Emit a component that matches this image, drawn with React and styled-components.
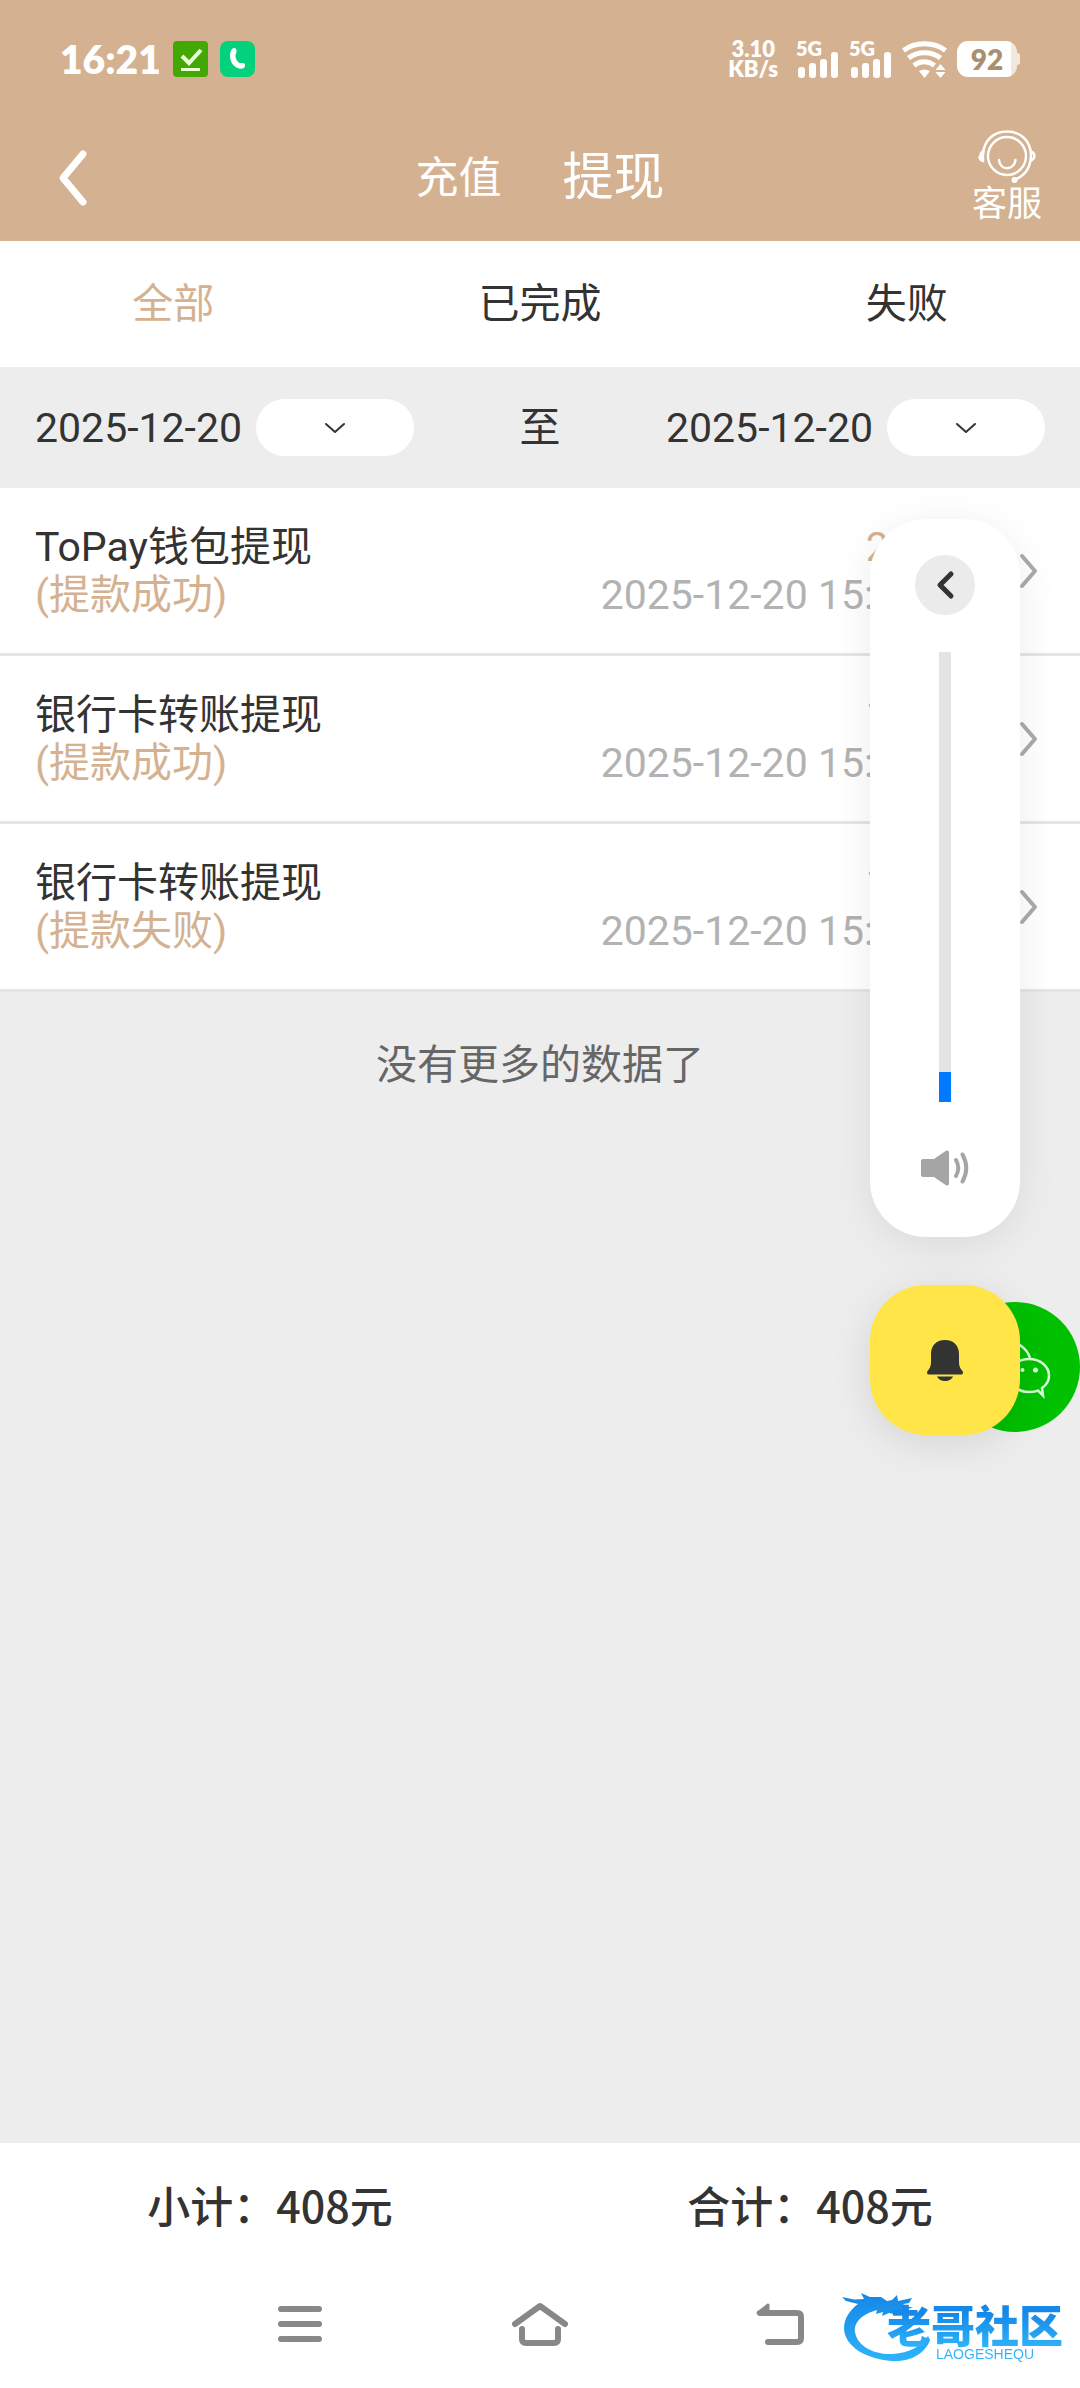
import React, { useState } from 'react';
import styled, { createGlobalStyle } from 'styled-components';

const GlobalStyle = createGlobalStyle`
  * {
    box-sizing: border-box;
  }

  body {
    margin: 0;
    background-color: #ededed;
    color: #333333;
    font-family: Roboto, 'Noto Sans CJK SC', sans-serif;
    font-size: 41px;
    line-height: 48px;
  }

  button {
    padding: 0;
    border: none;
    background: none;
    color: inherit;
    font: inherit;
    cursor: pointer;
  }

  a {
    color: inherit;
    text-decoration: none;
  }

  svg {
    display: block;
    flex-shrink: 0;
  }
`;

const Page = styled.div`
  position: relative;
  display: flex;
  flex-direction: column;
  min-height: 100vh;
  overflow: hidden;
`;

const Header = styled.header`
  background-color: #d4b291;
  color: white;
`;

const StatusBar = styled.div`
  display: flex;
  align-items: center;
  justify-content: space-between;
  height: 118px;
  padding: 0 60px;
`;

const StatusGroup = styled.div`
  display: flex;
  align-items: center;
  gap: ${(props) => props.$gap}px;
`;

const Clock = styled.span`
  font-family: Lato, sans-serif;
  font-size: 39px;
  font-weight: 800;
`;

const Speed = styled.span`
  display: flex;
  flex-direction: column;
  margin-right: 8px;
  font-family: Lato, sans-serif;
  font-size: 22px;
  font-weight: 800;
  line-height: 20px;
  text-align: center;
`;

const Signal = styled.span`
  display: grid;
  width: 43px;
  font-family: Lato, sans-serif;
  font-size: 20px;
  font-weight: 800;
  line-height: 14px;

  > * {
    grid-area: 1 / 1;
  }
`;

const Battery = styled.span`
  display: flex;
  align-items: center;

  span {
    width: 60px;
    border-radius: 11px;
    background: linear-gradient(to right, white 54px, #f3e8dd 54px);
    color: #a98f70;
    font-family: Lato, sans-serif;
    font-size: 28px;
    font-weight: 800;
    line-height: 36px;
    text-align: center;
  }

  &::after {
    content: '';
    width: 3px;
    height: 12px;
    border-radius: 0 3px 3px 0;
    background-color: #f3e8dd;
  }
`;

const TitleBar = styled.div`
  display: grid;
  grid-template-columns: 1fr auto 1fr;
  align-items: center;
  height: 123px;
  padding: 0 38px 4px 56px;
`;

const BackButton = styled.button`
  justify-self: start;
`;

const TitleTabs = styled.nav`
  display: flex;
  align-items: center;
  gap: 61px;
  margin-left: -18px;
`;

const TitleTab = styled.a`
  font-size: ${(props) => (props.$active ? 51 : 43)}px;
  line-height: 60px;
`;

const ServiceLink = styled.a`
  display: flex;
  flex-direction: column;
  align-items: center;
  justify-self: end;
  font-size: 35px;
  line-height: 44px;
`;

const FilterTabs = styled.nav`
  display: flex;
  align-items: center;
  justify-content: space-around;
  height: 126px;
  background-color: white;
`;

const FilterTab = styled.button`
  color: ${(props) => (props.$active ? '#d4b291' : '#333333')};
`;

const DateBar = styled.div`
  display: flex;
  align-items: center;
  justify-content: space-between;
  height: 121px;
  padding: 0 35px;
`;

const DateField = styled.div`
  display: flex;
  align-items: center;
  gap: 14px;
`;

const DateButton = styled.button`
  display: flex;
  align-items: center;
  justify-content: center;
  width: 158px;
  height: 57px;
  border-radius: 29px;
  background-color: white;
`;

const RecordList = styled.ul`
  margin: 0;
  padding: 0;
  list-style: none;
`;

const Record = styled.a`
  display: flex;
  align-items: center;
  gap: 42px;
  padding: 35px 42px 34px 35px;
  border-bottom: 3px solid #e5e5e5;
  background-color: white;
`;

const RecordColumn = styled.div`
  display: flex;
  flex-direction: column;
  flex: ${(props) => (props.$end ? 'none' : 1)};
  align-items: ${(props) => (props.$end ? 'flex-end' : 'flex-start')};
`;

const Accent = styled.span`
  color: #d4b291;
`;

const Time = styled.time`
  color: #b2b2b2;
`;

const NoMore = styled.p`
  flex: 1;
  margin: 0;
  padding-top: 49px;
  color: #666666;
  text-align: center;
`;

const Summary = styled.footer`
  display: grid;
  grid-template-columns: 1fr 1fr;
  align-items: center;
  height: 122px;
  background-color: white;
  font-family: 'Noto Sans CJK SC', sans-serif;
  font-size: 43px;
  font-weight: 500;
  text-align: center;
`;

const SystemNav = styled.nav`
  display: flex;
  align-items: center;
  justify-content: center;
  gap: 180px;
  height: 123px;
  padding-bottom: 5px;
  background-color: white;

  button {
    display: flex;
    justify-content: center;
    width: 60px;
  }
`;

const VolumePanel = styled.aside`
  position: absolute;
  top: 519px;
  right: 60px;
  z-index: 2;
  display: flex;
  flex-direction: column;
  align-items: center;
  width: 150px;
  padding: 36px 0 51px;
  border-radius: 56px;
  background-color: white;
  box-shadow: 0 8px 40px rgba(0, 0, 0, 0.08);
`;

const RoundButton = styled.button`
  display: flex;
  align-items: center;
  justify-content: center;
  width: 60px;
  height: 60px;
  border-radius: 50%;
  background-color: #ebebeb;
`;

const VolumeSlider = styled.input`
  width: 12px;
  height: 450px;
  margin: 37px 0 48px;
  appearance: none;
  writing-mode: vertical-lr;
  direction: rtl;
  background: linear-gradient(to top, #007aff ${(props) => props.$percent}%, #e4e4e4 ${(props) => props.$percent}%);

  &::-webkit-slider-thumb {
    appearance: none;
    width: 12px;
    height: 1px;
  }
`;

const BellButton = styled.button`
  position: absolute;
  top: 1285px;
  right: 60px;
  z-index: 2;
  display: flex;
  align-items: center;
  justify-content: center;
  width: 150px;
  height: 150px;
  border-radius: 56px;
  background-color: #ffe548;
  box-shadow: 0 8px 40px rgba(0, 0, 0, 0.1);
`;

const WechatButton = styled.button`
  position: absolute;
  top: 1302px;
  right: 0;
  width: 130px;
  height: 130px;
  border-radius: 50%;
  background-color: #00c000;
`;

const Watermark = styled.div`
  position: absolute;
  right: 14px;
  bottom: 22px;
  z-index: 3;
  display: grid;
  pointer-events: none;

  > * {
    grid-area: 1 / 1;
  }
`;

const WatermarkText = styled.div`
  display: flex;
  flex-direction: column;
  align-items: center;
  padding: 18px 0 0 46px;
  background: linear-gradient(#1689e8 24px, #2fb4fa 58px);
  background-clip: text;
  color: transparent;

  strong {
    font-size: 44px;
    font-weight: 900;
    line-height: 40px;
  }

  small {
    padding-left: 20px;
    font-family: 'Liberation Sans', sans-serif;
    font-size: 14px;
    line-height: 12px;
  }
`;

const DoneIcon = () => (
  <svg width="35" height="36" viewBox="0 0 35 36" fill="none" stroke="#e8ffd8">
    <rect width="35" height="36" rx="4" fill="#43a803" stroke="none" />
    <path d="M9 15l7 7 12-13" strokeWidth="4" />
    <path d="M8 28.500h19" strokeWidth="3" />
  </svg>
);

const PhoneAppIcon = () => (
  <svg width="35" height="36" viewBox="0 0 35 36">
    <rect width="35" height="36" rx="8" fill="#04d17b" />
    <path
      d="M14 7c2 0 3 2 2.500 4l-1 3c-.3 3 1.500 6.500 4 8l3.500 0c2 .3 2.500 2 1.700 4-.8 1.500-3 2-5.700 1.500C13.500 26 10 21 10 15c0-4 1.500-8 4-8z"
      fill="white"
    />
  </svg>
);

const SignalIcon = () => (
  <Signal>
    <span>5G</span>
    <svg width="43" height="37" viewBox="0 0 43 37" fill="white">
      <rect x="2" y="26" width="7" height="11" rx="3" />
      <rect x="13" y="22" width="7" height="15" rx="3" />
      <rect x="24" y="18" width="7" height="19" rx="3" />
      <rect x="35" y="11" width="7" height="26" rx="3" />
    </svg>
  </Signal>
);

const WifiIcon = () => (
  <svg width="45" height="37" viewBox="0 0 45 37" fill="none" stroke="white" strokeWidth="5">
    <path d="M1.500 9.500C13 .5 32 .5 43.500 9.500" />
    <path d="M6.500 17c9-7 23-7 32 0" />
    <path d="M12 24.500c6-5 14-5 20.500 0" />
    <path d="M17 30q5.500-3 11 0l-5.500 7z" fill="white" stroke="none" />
    <path d="M38.500 23l5 6h-10zM38.500 37l5-6h-10z" fill="white" stroke="none" />
  </svg>
);

const ServiceIcon = () => (
  <svg width="58" height="54" viewBox="0 0 58 54" fill="none" stroke="white" strokeWidth="2.500">
    <circle cx="29" cy="27" r="19" />
    <path d="M5 31C1.500 29 1.500 24.500 5 22.500v9.500c-3-.5-3.500-2-3.500-5" />
    <path d="M5 25C6 11 16 2.500 29 2.500S52 11 53 25c0 13-6 22-17 26" />
    <path d="M53 22.500c4.500 2 4.500 7 0 9" />
    <path d="M21 31c1 11 15 11 16.500 0" strokeLinecap="round" />
    <circle cx="36.500" cy="51" r="1.800" fill="white" />
  </svg>
);

const Chevron = ({ points, width, height, color, stroke }) => (
  <svg width={width} height={height} fill="none" stroke={color} strokeWidth={stroke} strokeLinecap="round" strokeLinejoin="round">
    <polyline points={points} />
  </svg>
);

const SpeakerIcon = () => (
  <svg width="48" height="36" viewBox="0 0 48 36" fill="#a5a5a5">
    <path d="M2 9h11L25 .8Q28-.5 28 3v30q0 3.500-3 2.200L13 27H2q-2 0-2-2V11q0-2 2-2z" />
    <path d="M35 10q4.500 8 0 16M41.500 4.500q7.500 13.500 0 27" fill="none" stroke="#a5a5a5" strokeWidth="4" strokeLinecap="round" />
  </svg>
);

const BellIcon = () => (
  <svg width="38" height="41" viewBox="0 0 38 41" fill="#333333">
    <path d="M19 0C10 0 5 6 5 14v8c0 4-1 6-3.500 9C.5 33 1 34.500 3 34.500h32c2 0 2.500-1.500 1.500-3.500C34 28 33 26 33 22v-8C33 6 28 0 19 0z" />
    <path d="M11 36.500h16c-1 2.500-4 4.500-8 4.500s-7-2-8-4.500z" />
  </svg>
);

const WechatIcon = () => (
  <svg width="130" height="130" viewBox="0 0 130 130" fill="none" stroke="#d9ffd9" strokeWidth="2.500">
    <path d="M80 56C77 46 67 39 55 39c-15 0-27 10-27 22 0 7 4 13 10 17l-2 8 9-5 15 2" />
    <path d="M79 57c-11 0-20 7-20 16.500S68 90 79 90c4 0 7-.5 9-1.500l5 5-1-7.500c4.500-3 7-7.500 7-12.500C99 64 90 57 79 57z" />
    <circle cx="72.500" cy="68" r="2" fill="#d9ffd9" stroke="none" />
    <circle cx="85.500" cy="68" r="2.500" fill="#d9ffd9" stroke="none" />
  </svg>
);

const MenuIcon = () => (
  <svg width="46" height="38" viewBox="0 0 46 38" stroke="#888888" strokeWidth="6" strokeLinecap="round">
    <path d="M4 4h38M4 19h38M4 34h38" />
  </svg>
);

const HomeIcon = () => (
  <svg width="58" height="45" viewBox="0 0 58 45" fill="none" stroke="#888888" strokeWidth="6" strokeLinecap="round" strokeLinejoin="round">
    <path d="M4 22L29 4l25 18M11 27v10q0 4 4 4h28q4 0 4-4V27" />
  </svg>
);

const ReturnIcon = () => (
  <svg width="50" height="44" viewBox="0 0 50 44" fill="none" stroke="#888888" strokeWidth="6" strokeLinecap="round" strokeLinejoin="round">
    <path d="M5 11h37q4 0 4 4v21q0 4-4 4H13" />
    <path d="M13 3v8H3z" fill="#888888" strokeWidth="3" />
  </svg>
);

const DragonLogo = () => (
  <svg width="228" height="76" viewBox="0 0 228 76">
    <defs>
      <linearGradient id="dragon" x1="0" y1="0" x2="0" y2="1">
        <stop offset="0" stopColor="#1586e6" />
        <stop offset="1" stopColor="#2cb4fb" />
      </linearGradient>
    </defs>
    <path
      fill="url(#dragon)"
      d="M4 7l12 2.500 10-.5-3-6 9 4 11 0 6 4 5-1 5-5 1 6 14-3-3 5-6 1 3 3h7l-7 3 2 4-8-2-6 2-5-1-7 3 1-4-7 2 1-4C22 25 16 33 17 42c2 13 17 23 38 22 16-1 29-8 35-18l2 4C87 64 72 72 54 71 27 69 7 56 6 39 6 28 12 20 20 14L8 11z"
    />
  </svg>
);

const records = [
  { id: 1, title: 'ToPay钱包提现', status: '(提款成功)', amount: '208元', time: '2025-12-20 15:48:20' },
  { id: 2, title: '银行卡转账提现', status: '(提款成功)', amount: '100元', time: '2025-12-20 15:36:52' },
  { id: 3, title: '银行卡转账提现', status: '(提款失败)', amount: '100元', time: '2025-12-20 15:30:25' },
];

const filters = ['全部', '已完成', '失败'];

const DatePicker = ({ value, label }) => (
  <DateField>
    <time>{value}</time>
    <DateButton aria-label={label} aria-haspopup="dialog">
      <Chevron width={22} height={14} points="2,3 11,11 20,3" color="#333333" stroke={2} />
    </DateButton>
  </DateField>
);

const App = () => {
  const [filter, setFilter] = useState('全部');
  const [volume, setVolume] = useState(1);

  return (
    <Page>
      <GlobalStyle />
      <Header>
        <StatusBar>
          <StatusGroup $gap={12}>
            <Clock>16:21</Clock>
            <DoneIcon />
            <PhoneAppIcon />
          </StatusGroup>
          <StatusGroup $gap={10}>
            <Speed>
              <span>3.10</span>
              <span>KB/s</span>
            </Speed>
            <SignalIcon />
            <SignalIcon />
            <WifiIcon />
            <Battery><span>92</span></Battery>
          </StatusGroup>
        </StatusBar>
        <TitleBar>
          <BackButton aria-label="返回">
            <Chevron width={34} height={58} points="27,5 7,29 27,53" color="white" stroke={7} />
          </BackButton>
          <TitleTabs>
            <TitleTab href="#recharge">充值</TitleTab>
            <TitleTab href="#withdraw" $active>提现</TitleTab>
          </TitleTabs>
          <ServiceLink href="#service">
            <ServiceIcon />
            客服
          </ServiceLink>
        </TitleBar>
      </Header>

      <FilterTabs>
        {filters.map((name) => (
          <FilterTab key={name} $active={name === filter} onClick={() => setFilter(name)}>
            {name}
          </FilterTab>
        ))}
      </FilterTabs>

      <DateBar>
        <DatePicker value="2025-12-20" label="开始日期" />
        <span>至</span>
        <DatePicker value="2025-12-20" label="结束日期" />
      </DateBar>

      <RecordList>
        {records.map((record) => (
          <li key={record.id}>
            <Record href={`#record-${record.id}`}>
              <RecordColumn>
                <span>{record.title}</span>
                <Accent>{record.status}</Accent>
              </RecordColumn>
              <RecordColumn $end>
                <Accent>{record.amount}</Accent>
                <Time>{record.time}</Time>
              </RecordColumn>
              <Chevron width={20} height={38} points="4,4 17,19 4,34" color="#aaaaaa" stroke={4} />
            </Record>
          </li>
        ))}
      </RecordList>
      <NoMore>没有更多的数据了</NoMore>

      <Summary>
        <span>小计：408元</span>
        <span>合计：408元</span>
      </Summary>
      <SystemNav>
        <button aria-label="菜单"><MenuIcon /></button>
        <button aria-label="主页"><HomeIcon /></button>
        <button aria-label="后退"><ReturnIcon /></button>
      </SystemNav>

      <VolumePanel>
        <RoundButton aria-label="收起">
          <Chevron width={22} height={32} points="17,5 6,16 17,27" color="#333333" stroke={5} />
        </RoundButton>
        <VolumeSlider
          type="range"
          aria-label="音量"
          min="0"
          max="15"
          value={volume}
          $percent={(volume / 15) * 100}
          onChange={(e) => setVolume(Number(e.target.value))}
        />
        <SpeakerIcon />
      </VolumePanel>
      <WechatButton aria-label="微信"><WechatIcon /></WechatButton>
      <BellButton aria-label="通知"><BellIcon /></BellButton>

      <Watermark>
        <DragonLogo />
        <WatermarkText>
          <strong>老哥社区</strong>
          <small>LAOGESHEQU</small>
        </WatermarkText>
      </Watermark>
    </Page>
  );
};

export default App;
